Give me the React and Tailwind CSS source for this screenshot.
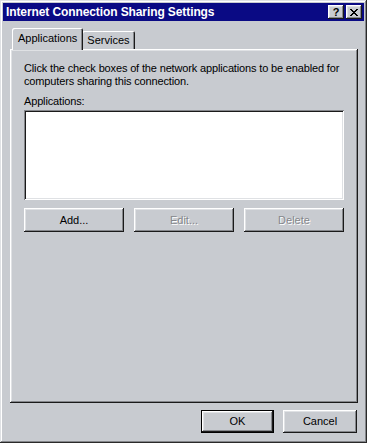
export default function App() {
  const raised =
    "shadow-[inset_-1px_-1px_#1a1a1a,inset_1px_1px_#ffffff,inset_-2px_-2px_#85878b,inset_2px_2px_#dfe1e4]";
  const font = "font-['Liberation_Sans',Arial,sans-serif]";
  return (
    <div
      className={`w-[367px] h-[443px] bg-[#c8cbd0] p-[3px] flex flex-col ${font} text-[11px] text-black shadow-[inset_-1px_-1px_#2a2a2a,inset_1px_1px_#dfe1e4,inset_-2px_-2px_#85878b,inset_2px_2px_#ffffff]`}
    >
      {/* Title bar */}
      <div className="h-[18px] bg-[#0a0a84] flex items-center pl-[3px] pr-[2px]">
        <span className="text-white font-bold text-[12px] leading-none tracking-[-0.1px]">
          Internet Connection Sharing Settings
        </span>
        <div className="ml-auto flex gap-[2px]">
          <div className={`w-[16px] h-[14px] bg-[#c8cbd0] flex items-center justify-center ${raised}`}>
            <span className="font-bold text-[11px] leading-none">?</span>
          </div>
          <div className={`w-[16px] h-[14px] bg-[#c8cbd0] flex items-center justify-center ${raised}`}>
            <svg width="8" height="7" viewBox="0 0 8 7">
              <path d="M0 0h2v1h-2zM6 0h2v1h-2zM1 1h2v1h-2zM5 1h2v1h-2zM2 2h4v1h-4zM3 3h2v1h-2zM2 4h4v1h-4zM1 5h2v1h-2zM5 5h2v1h-2zM0 6h2v1h-2zM6 6h2v1h-2z" fill="#000" />
            </svg>
          </div>
        </div>
      </div>

      {/* Tabs */}
      <div className="mt-[6px] ml-[9px] flex items-end h-[22px]">
        <div className="relative z-10 h-[22px] px-[6px] pt-[3px] bg-[#c8cbd0] -mb-[1px] shadow-[inset_1px_1px_#ffffff,inset_-1px_0_#1a1a1a,inset_-2px_0_#85878b] rounded-t-[2px] leading-[14px]">
          Applications
        </div>
        <div className="h-[18px] px-[5px] pt-[2px] -ml-[1px] bg-[#c8cbd0] shadow-[inset_1px_1px_#ffffff,inset_-1px_0_#1a1a1a,inset_-2px_0_#85878b] rounded-t-[2px] leading-[14px]">
          Services
        </div>
      </div>

      {/* Panel */}
      <div className={`ml-[7px] mr-[6px] h-[354px] pt-[13px] px-[14px] ${raised}`}>
        <p className="leading-[13px] whitespace-nowrap tracking-[-0.15px]">
          Click the check boxes of the network applications to be enabled for
          <br />
          computers sharing this connection.
        </p>
        <div className="mt-[7px] leading-[13px] tracking-[-0.15px]">Applications:</div>
        <div className="mt-[2px] h-[90px] bg-white shadow-[inset_1px_1px_#85878b,inset_-1px_-1px_#ffffff,inset_2px_2px_#1a1a1a,inset_-2px_-2px_#dfe1e4]" />
        <div className="mt-[8px] flex justify-between">
          <div className={`w-[100px] h-[24px] flex items-center justify-center ${raised}`}>Add...</div>
          <div className={`w-[100px] h-[24px] flex items-center justify-center text-[#85878b] [text-shadow:1px_1px_#ffffff] ${raised}`}>Edit...</div>
          <div className={`w-[100px] h-[24px] flex items-center justify-center text-[#85878b] [text-shadow:1px_1px_#ffffff] ${raised}`}>Delete</div>
        </div>
      </div>

      {/* Bottom buttons */}
      <div className="mt-[7px] mr-[7px] flex justify-end gap-[9px]">
        <div className="w-[73px] h-[23px] border border-black">
          <div className={`w-full h-full flex items-center justify-center ${raised}`}>OK</div>
        </div>
        <div className={`w-[74px] h-[23px] flex items-center justify-center ${raised}`}>Cancel</div>
      </div>
    </div>
  );
}
